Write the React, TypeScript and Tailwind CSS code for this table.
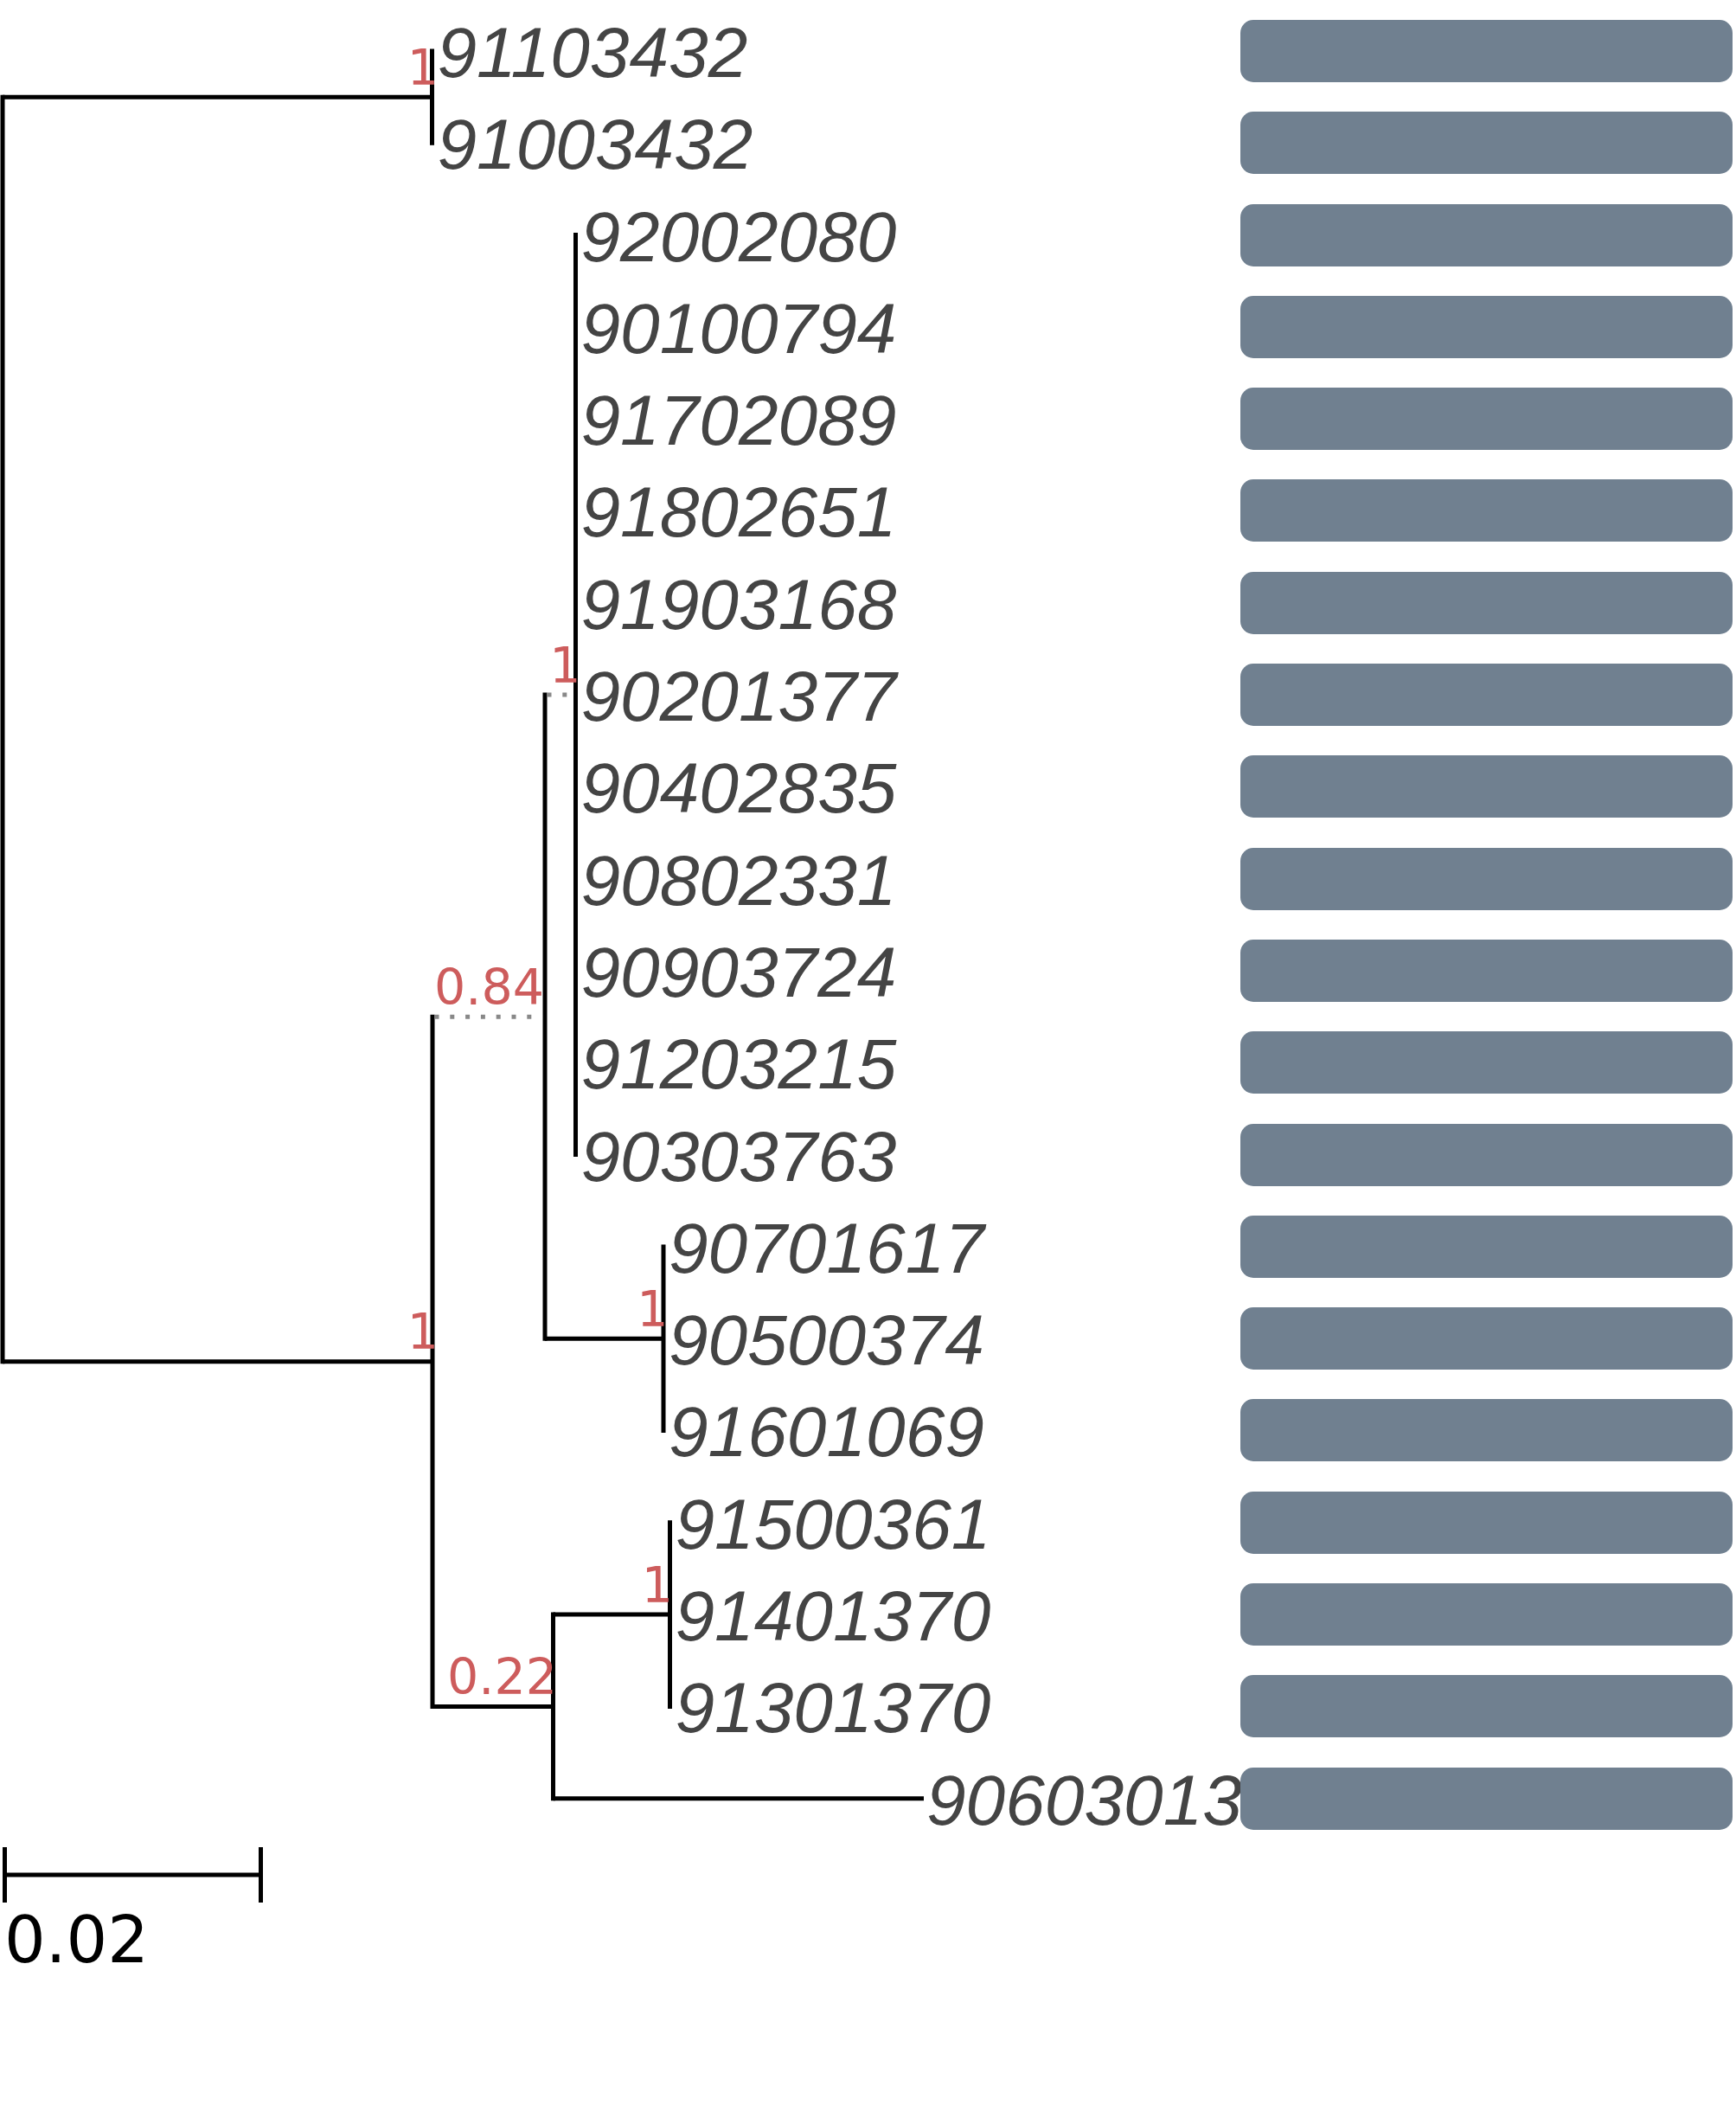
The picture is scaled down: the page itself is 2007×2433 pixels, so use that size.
import React from 'react';

// leaf rows, top to bottom; x = where the branch ends (label follows)
const leaves = [
  { name: '91103432', x: 499.5 },
  { name: '91003432', x: 499.5 },
  { name: '92002080', x: 665.5 },
  { name: '90100794', x: 665.5 },
  { name: '91702089', x: 665.5 },
  { name: '91802651', x: 665.5 },
  { name: '91903168', x: 665.5 },
  { name: '90201377', x: 665.5 },
  { name: '90402835', x: 665.5 },
  { name: '90802331', x: 665.5 },
  { name: '90903724', x: 665.5 },
  { name: '91203215', x: 665.5 },
  { name: '90303763', x: 665.5 },
  { name: '90701617', x: 767 },
  { name: '90500374', x: 767 },
  { name: '91601069', x: 767 },
  { name: '91500361', x: 774.5 },
  { name: '91401370', x: 774.5 },
  { name: '91301370', x: 774.5 },
  { name: '90603013', x: 1065 },
];

const ROW = 106.3;
const y = (i: number) => 59 + ROW * i;

const mid = (a: number, b: number) => (a + b) / 2;
const polyY = mid(y(2), y(12));
const c13Y = mid(y(13), y(15));
const c16Y = mid(y(16), y(18));
const n084Y = mid(polyY, c13Y);
const n022Y = mid(c16Y, y(19));
const topY = mid(y(0), y(1));
const lowY = mid(n084Y, n022Y);

type Seg = [number, number, number, number];

const solid: Seg[] = [
  [3, topY, 3, lowY],
  [3, topY, 499.5, topY],
  [499.5, y(0), 499.5, y(1)],
  [3, lowY, 500, lowY],
  [500, n084Y, 500, n022Y],
  [630, polyY, 630, c13Y],
  [665.5, y(2), 665.5, y(12)],
  [630, c13Y, 767, c13Y],
  [767, y(13), 767, y(15)],
  [500, n022Y, 639.5, n022Y],
  [639.5, c16Y, 639.5, y(19)],
  [639.5, c16Y, 774.5, c16Y],
  [774.5, y(16), 774.5, y(18)],
  [639.5, y(19), 1068, y(19)],
];

const dotted: Seg[] = [
  [502.5, n084Y, 627.5, n084Y],
  [632.5, polyY, 663, polyY],
];

const support = [
  { t: '1', x: 507, y: topY },
  { t: '1', x: 507, y: lowY },
  { t: '0.84', x: 629, y: n084Y },
  { t: '1', x: 671.5, y: polyY },
  { t: '1', x: 772.5, y: c13Y },
  { t: '0.22', x: 644, y: n022Y },
  { t: '1', x: 778, y: c16Y },
];

export default function App() {
  return (
    <div className="relative w-[2007px] h-[2433px] bg-white overflow-hidden">
      <div className="flex flex-col pt-[5.85px]">
        {leaves.map((leaf, i) => (
          <div key={i} className="flex items-center h-[106.3px]">
            <div className="w-[1434px] shrink-0 flex items-center">
              <span
                className="mt-[4px] whitespace-nowrap italic text-[82px] leading-none text-[#444444] font-['Liberation_Sans',Arial,sans-serif]"
                style={{ marginLeft: leaf.x + (i === 19 ? 6 : 6) }}
              >
                {leaf.name}
              </span>
            </div>
            <div className="w-[569px] h-[72px] rounded-[15px] bg-[#708090]" />
          </div>
        ))}
      </div>

      <svg
        className="absolute left-0 top-0 pointer-events-none"
        width={1434}
        height={2433}
        viewBox="0 0 1434 2433"
      >
        {solid.map(([x1, y1, x2, y2], i) => (
          <line
            key={'s' + i}
            x1={x1}
            y1={y1}
            x2={x2}
            y2={y2}
            stroke="#000"
            strokeWidth={5}
            strokeLinecap={x1 === x2 ? 'square' : 'butt'}
          />
        ))}
        {dotted.map(([x1, y1, x2, y2], i) => (
          <line
            key={'d' + i}
            x1={x1}
            y1={y1}
            x2={x2}
            y2={y2}
            stroke="#888888"
            strokeWidth={5}
            strokeDasharray="5 12.8"
          />
        ))}
        {support.map((s, i) => (
          <text
            key={'t' + i}
            x={s.x}
            y={s.y - 14.5}
            textAnchor="end"
            fill="#cd5c5c"
            fontSize={57}
            fontFamily="'DejaVu Sans', sans-serif"
          >
            {s.t}
          </text>
        ))}

        {/* scale bar */}
        <line x1={5.5} y1={2167} x2={301.5} y2={2167} stroke="#000" strokeWidth={5} />
        <line x1={5.5} y1={2135} x2={5.5} y2={2199} stroke="#000" strokeWidth={5} />
        <line x1={301.5} y1={2135} x2={301.5} y2={2199} stroke="#000" strokeWidth={5} />
        <text x={5} y={2268} fill="#000" fontSize={75} fontFamily="'DejaVu Sans', sans-serif">
          0.02
        </text>
      </svg>
    </div>
  );
}
